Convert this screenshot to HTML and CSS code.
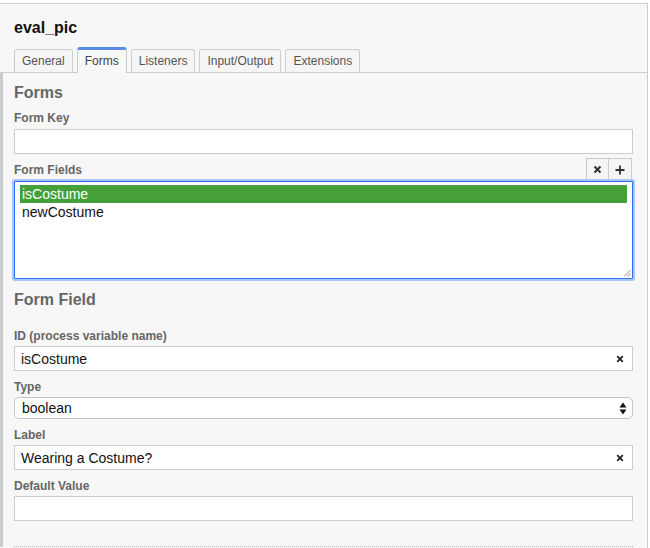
FILE: index.html
```html
<!DOCTYPE html>
<html>
<head>
<meta charset="utf-8">
<link rel="stylesheet" href="styles.css">
</head>
<body>
<div class="props">
  <div class="header">
    <div class="title">eval_pic</div>
    <div class="tabs">
      <div class="tab">General</div>
      <div class="tab active">Forms</div>
      <div class="tab">Listeners</div>
      <div class="tab">Input/Output</div>
      <div class="tab">Extensions</div>
    </div>
  </div>
  <div class="panel">
    <h2 class="heading">Forms</h2>
    <div class="group">
      <label class="label">Form Key</label>
      <div class="text-input"><input type="text" value=""></div>
    </div>
    <div class="group">
      <div class="list-head">
        <label class="label">Form Fields</label>
        <div class="btns">
          <div class="btn"><svg width="9" height="9" viewBox="0 0 9 9"><path d="M1.5 1.5L7.5 7.5M7.5 1.5L1.5 7.5" stroke="#333" stroke-width="2" fill="none"/></svg></div>
          <div class="btn"><svg width="10" height="10" viewBox="0 0 10 10"><path d="M5 0.5V9.5M0.5 5H9.5" stroke="#333" stroke-width="1.8" fill="none"/></svg></div>
        </div>
      </div>
      <div class="listbox">
        <div class="option selected">isCostume</div>
        <div class="option">newCostume</div>
        <svg class="grip" width="8" height="8" viewBox="0 0 8 8"><path d="M7.5 1L1 7.5M7.5 4L4 7.5M7.5 6.5L6.5 7.5" stroke="#777" stroke-width="0.8" fill="none"/></svg>
      </div>
    </div>
    <h2 class="heading sub">Form Field</h2>
    <div class="group g-id">
      <label class="label tight">ID (process variable name)</label>
      <div class="text-input"><input type="text" value="isCostume"><svg class="clear" width="8" height="8" viewBox="0 0 8 8"><path d="M1.2 1.2L6.8 6.8M6.8 1.2L1.2 6.8" stroke="#222" stroke-width="1.8" fill="none"/></svg></div>
    </div>
    <div class="group g-type">
      <label class="label tight">Type</label>
      <div class="select"><span>boolean</span><svg width="8" height="13" viewBox="0 0 8 13"><path d="M4 0.5L7.5 5.5H0.5Z M4 12.5L7.5 7.5H0.5Z" fill="#111"/></svg></div>
    </div>
    <div class="group">
      <label class="label tight">Label</label>
      <div class="text-input"><input type="text" value="Wearing a Costume?"><svg class="clear" width="8" height="8" viewBox="0 0 8 8"><path d="M1.2 1.2L6.8 6.8M6.8 1.2L1.2 6.8" stroke="#222" stroke-width="1.8" fill="none"/></svg></div>
    </div>
    <div class="group">
      <label class="label tight">Default Value</label>
      <div class="text-input"><input type="text" value=""></div>
    </div>
    <div class="divider"></div>
  </div>
</div>
</body>
</html>
```
FILE: styles.css
```css
html, body {
  margin: 0;
  padding: 0;
  background: #ffffff;
  font-family: "Liberation Sans", Arial, Helvetica, sans-serif;
}
.props {
  margin-top: 3px;
  width: 647px;
  border-top: 1px solid #cccccc;
  border-right: 1px solid #cccccc;
  background: #f7f7f7;
  height: 560px;
  overflow: hidden;
}
.header {
  padding-top: 15px;
}
.title {
  padding-left: 14px;
  font-size: 16px;
  font-weight: bold;
  line-height: 18px;
  color: #111;
}
.tabs {
  margin-top: 10px;
  display: flex;
  align-items: flex-end;
  gap: 4px;
  padding-left: 14px;
  border-bottom: 1px solid #cccccc;
}
.tab {
  height: 22px;
  line-height: 22px;
  padding: 0 7px;
  font-size: 12px;
  color: #555;
  background: #f5f5f5;
  border: 1px solid #cccccc;
  border-bottom: none;
  border-radius: 3px 3px 0 0;
}
.tab.active {
  height: 23px;
  line-height: 23px;
  border-top: 3px solid #5a8de6;
  background: #f7f7f7;
  color: #444;
  margin-bottom: -1px;
}
.panel {
  border-left: 3px solid #cccccc;
  padding: 11px 14px 0 11px;
}
.heading {
  margin: 0 0 9px 0;
  font-size: 16px;
  line-height: 18px;
  font-weight: bold;
  color: #666;
}
.heading.sub {
  margin-top: 12px;
  margin-bottom: 20px;
}
.group {
  margin-bottom: 9px;
}
.g-id {
  margin-bottom: 9px;
}
.g-type {
  margin-bottom: 9px;
}
.label {
  display: block;
  font-size: 12px;
  line-height: 15px;
  font-weight: bold;
  color: #666;
  margin-bottom: 3px;
}
.label.tight {
  margin-bottom: 2px;
}
.text-input {
  box-sizing: border-box;
  height: 25px;
  border: 1px solid #cccccc;
  background: #fff;
  display: flex;
  align-items: center;
  padding: 0 7px 0 6px;
}
.text-input input {
  flex: 1;
  border: none;
  outline: none;
  padding: 0;
  margin: 0;
  background: transparent;
  font-family: "Liberation Sans", Arial, sans-serif;
  font-size: 14px;
  color: #111;
  min-width: 0;
}
.clear {
  flex: none;
  margin-right: 1px;
}
.list-head {
  display: flex;
  justify-content: space-between;
  align-items: flex-end;
  height: 18px;
}
.btns {
  display: flex;
  margin-top: -5px;
  align-self: flex-end;
  margin-right: 1px;
}
.btn {
  box-sizing: border-box;
  width: 23px;
  height: 23px;
  border: 1px solid #cccccc;
  background: #f5f5f5;
  display: flex;
  align-items: center;
  justify-content: center;
}
.btn + .btn {
  border-left: none;
}
.listbox {
  position: relative;
  box-sizing: border-box;
  height: 98px;
  border: 1px solid #2f6df0;
  box-shadow: 0 0 0 2px #a9c6fa;
  background: #fff;
  padding: 3px 5px 3px 5px;
  border-radius: 1px;
}
.option {
  height: 18px;
  line-height: 18px;
  padding-left: 2px;
  font-size: 14px;
  color: #111;
}
.option.selected {
  background: #45a03a;
  color: #fff;
}
.grip {
  position: absolute;
  right: 1px;
  bottom: 1px;
}
.select {
  box-sizing: border-box;
  height: 22px;
  border: 1px solid #c4c4c4;
  border-radius: 5px;
  background: #fff;
  display: flex;
  align-items: center;
  justify-content: space-between;
  padding: 0 5px 0 7px;
  font-size: 14px;
  color: #111;
}
.divider {
  margin-top: 25px;
  border-bottom: 1px dotted #bbbbbb;
}
```
